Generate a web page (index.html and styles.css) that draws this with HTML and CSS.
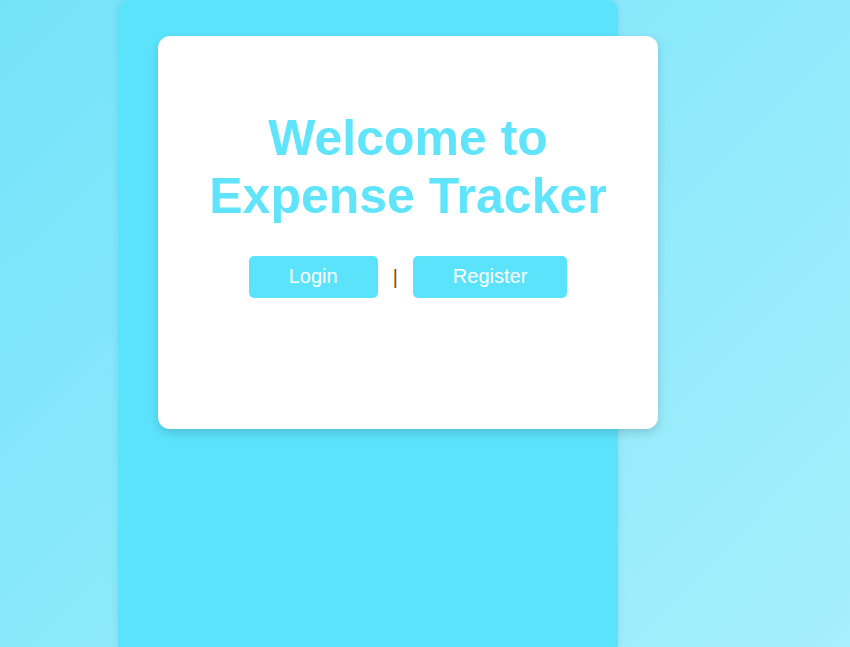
FILE: index.html
```html
<!DOCTYPE html>
<html lang="en">
<head>
  <meta charset="UTF-8" />
  <meta name="viewport" content="width=device-width, initial-scale=1.0"/>
  <title>Expense Tracker</title>
  <link rel="stylesheet" href="styles.css">
</head>
<body>
  <div class="page">
    <div class="card">
      <h1>Welcome to Expense Tracker</h1>
      <div class="actions">
        <button class="btn">Login</button>
        <span class="sep">|</span>
        <button class="btn">Register</button>
      </div>
    </div>
  </div>
</body>
</html>
```

FILE: styles.css
```css
html, body {
  height: 100%;
}
body {
  font-family: Arial, "Liberation Sans", sans-serif;
  background: linear-gradient(135deg, #74e3fa 0%, #a6effc 100%);
  margin: 0;
  overflow: hidden;
}
.page {
  width: 500px;
  min-height: 100%;
  margin-left: 118px;
  padding-top: 36px;
  padding-left: 40px;
  box-sizing: border-box;
  background-color: #5ce3fc;
  border-radius: 10px 10px 0 0;
  box-shadow: 0 0 8px rgba(0, 0, 0, 0.08);
}
.card {
  width: 500px;
  height: 393px;
  padding: 40px;
  box-sizing: border-box;
  background-color: #fff;
  border-radius: 12px;
  box-shadow: 0 4px 10px rgba(0, 0, 0, 0.15);
  text-align: center;
}
h1 {
  font-size: 50px;
  color: #5fe4fc;
  margin: 33px 0 31px;
}
.actions {
  display: flex;
  justify-content: center;
  align-items: center;
}
.btn {
  font-family: Arial, "Liberation Sans", sans-serif;
  font-size: 20px;
  color: #fff;
  background-color: #5ce3fc;
  border: none;
  border-radius: 5px;
  padding: 9px 40px 10px;
  cursor: pointer;
}
.sep {
  font-size: 20px;
  color: #8b4513;
  margin: 0 15px;
}
```
